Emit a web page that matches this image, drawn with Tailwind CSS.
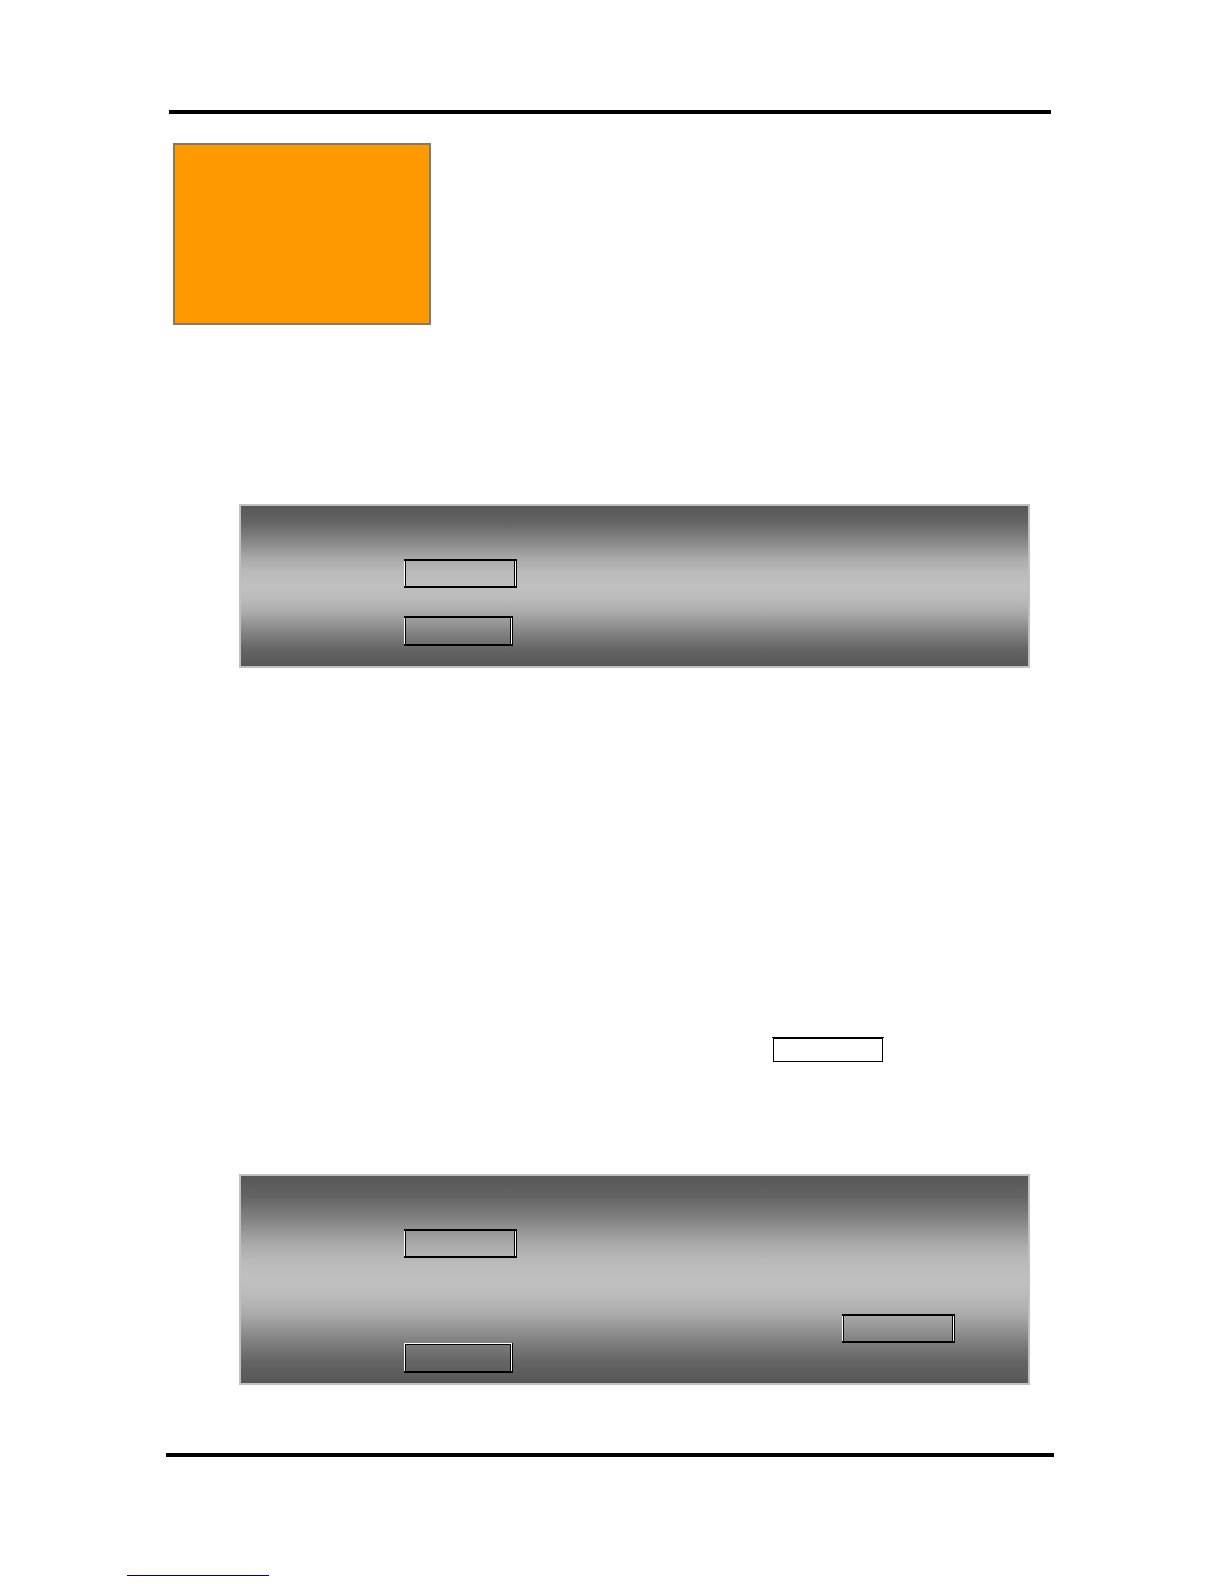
<!DOCTYPE html>
<html lang="en">
<head>
    <meta charset="UTF-8">
    <meta name="viewport" content="width=device-width, initial-scale=1.0">
    <title>Manual Page</title>
    <script src="https://cdn.jsdelivr.net/npm/@tailwindcss/browser@4"></script>
</head>
<body class="min-h-screen bg-white font-['Liberation_Sans',sans-serif]">
    <main class="pt-[110px] pl-[166px] pr-[170px]">
        <header class="mx-[3px] h-1 bg-black"></header>

        <!-- Chapter block -->
        <div class="mt-[29px] ml-[7px] h-[182px] w-[258px] border-2 border-[#857a68] bg-[#ff9900]"></div>

        <!-- First step panel -->
        <section class="mt-[179px] ml-[73px] mr-6 flex flex-col items-start gap-7 border-2 border-[#c0c0c0] bg-[linear-gradient(#575757_0%,#646464_10%,#808080_20%,#aaaaaa_33%,#b9b9b9_41%,#bfbfbf_48%,#bfbfbf_52%,#b9b9b9_59%,#aaaaaa_67%,#808080_80%,#646464_90%,#575757_100%)] pt-[53px] pb-5 pl-[163px]">
            <div class="flex h-[29px] w-[113px] border-y-2 border-r border-black">
                <div class="w-px bg-white"></div>
                <div class="flex-1 border-x border-black"></div>
                <div class="w-px bg-white"></div>
            </div>
            <div class="flex h-[30px] w-[109px] border-y-2 border-r border-black">
                <div class="w-px bg-white"></div>
                <div class="flex-1 border-x border-black"></div>
                <div class="w-px bg-white"></div>
            </div>
        </section>

        <!-- Key frame in the body text -->
        <div class="mt-[369px] mr-[170px] flex justify-end">
            <div class="h-[25px] w-[112px] border-t border-black px-px">
                <div class="h-6 border border-black"></div>
            </div>
        </div>

        <!-- Second step panel -->
        <section class="mt-28 ml-[73px] mr-6 flex flex-col items-start border-2 border-[#c0c0c0] bg-[linear-gradient(#575757_0%,#646464_10%,#808080_20%,#aaaaaa_33%,#b9b9b9_41%,#bfbfbf_48%,#bfbfbf_52%,#b9b9b9_59%,#aaaaaa_67%,#808080_80%,#646464_90%,#575757_100%)] pt-[53px] pb-[10px] pl-[163px]">
            <div class="flex h-[29px] w-[113px] border-y-2 border-r border-black">
                <div class="w-px bg-white"></div>
                <div class="flex-1 border-x border-black"></div>
                <div class="w-px bg-white"></div>
            </div>
            <div class="mt-14 mr-[73px] flex h-[29px] w-[113px] self-end border-y-2 border-r border-black">
                <div class="w-px bg-white"></div>
                <div class="flex-1 border-x border-black"></div>
                <div class="w-px bg-white"></div>
            </div>
            <div class="flex h-[30px] w-[109px] border-r border-b-2 border-black">
                <div class="flex flex-1 border-x border-t border-white">
                    <div class="flex-1 border-x border-t border-black"></div>
                </div>
            </div>
        </section>

        <footer class="mt-[68px] h-1 bg-black"></footer>
    </main>

    <div class="mt-[118px] mb-2 ml-[127px] h-px w-[142px] bg-[#000080]"></div>
</body>
</html>
